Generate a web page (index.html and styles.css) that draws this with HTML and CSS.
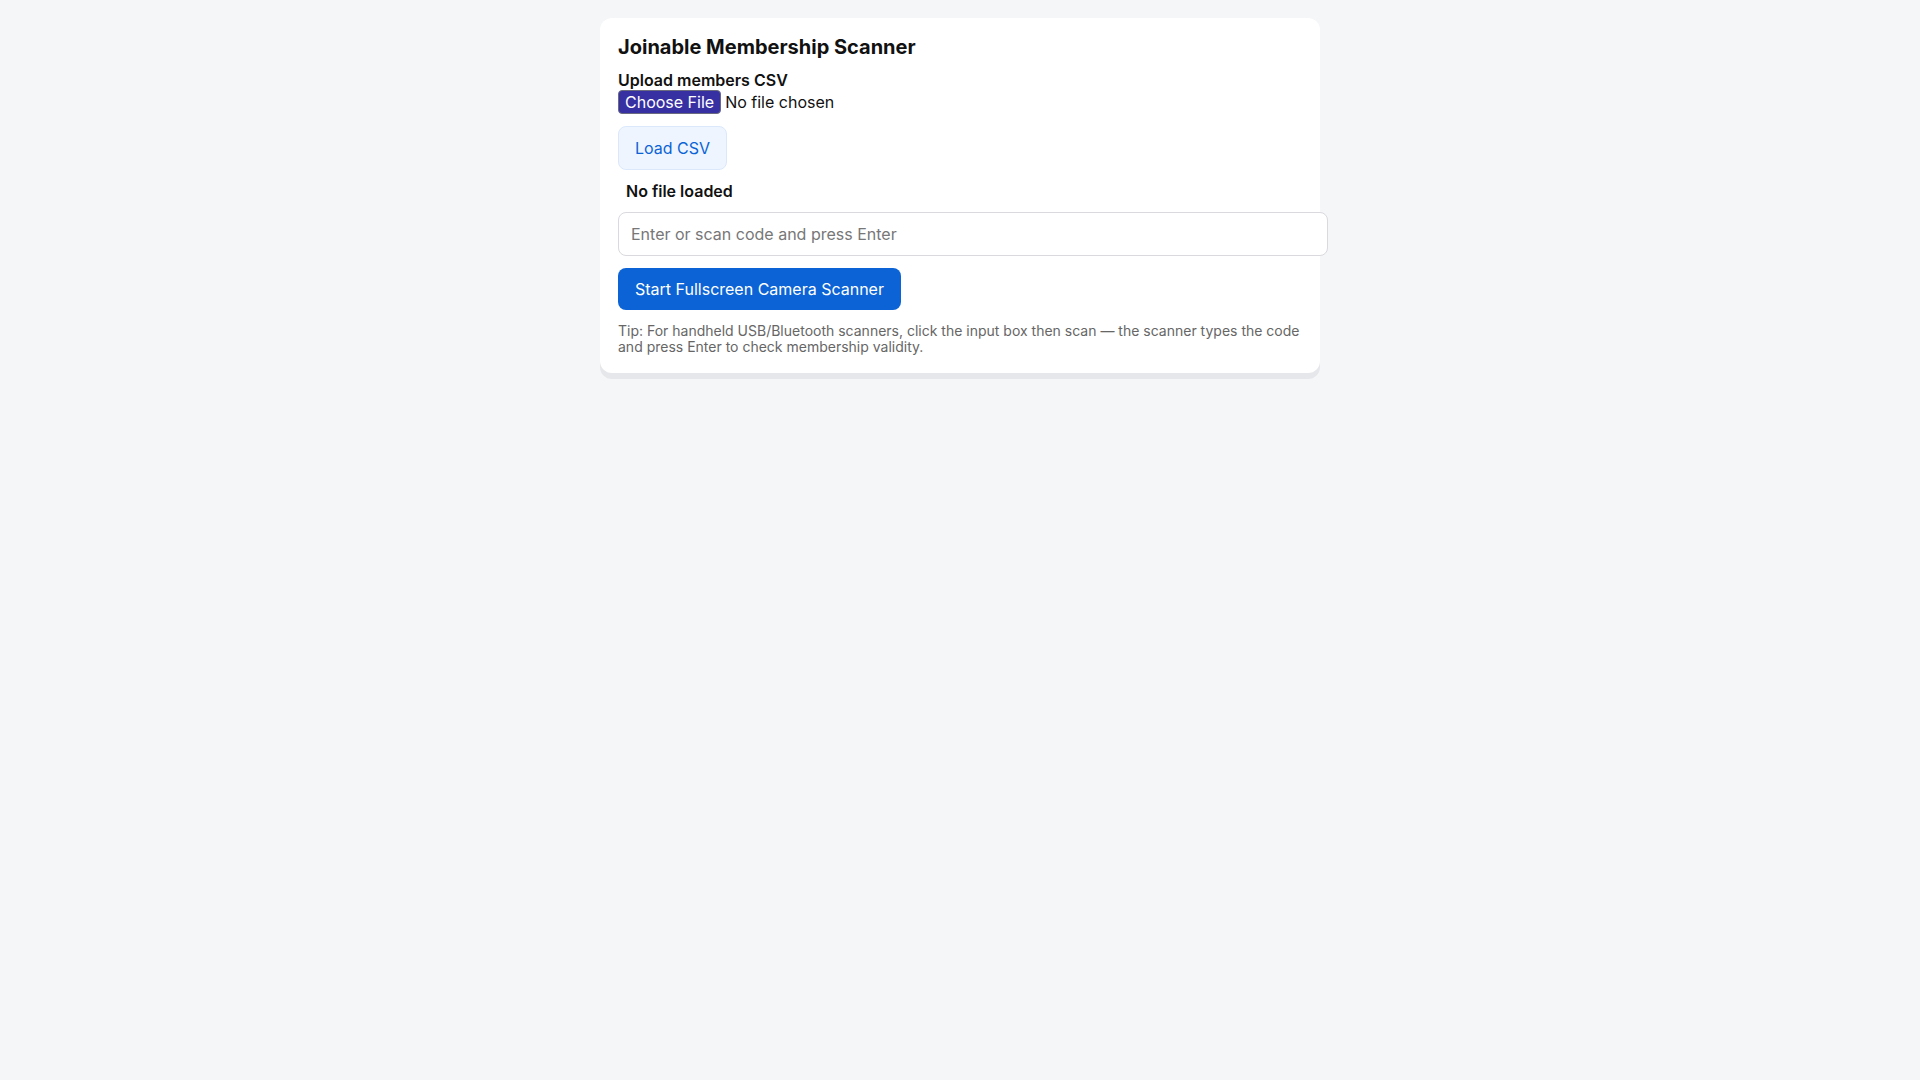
FILE: index.html
```html
<!DOCTYPE html>
<html lang="en">
<head>
<meta charset="utf-8">
<title>Joinable Membership Scanner</title>
<link rel="stylesheet" href="styles.css">
</head>
<body>
<main class="card">
  <h1 class="title">Joinable Membership Scanner</h1>
  <label class="field-label" for="csv">Upload members CSV</label>
  <input class="file-input" id="csv" type="file" accept=".csv">
  <div class="row row-load">
    <button class="btn btn-light" type="button">Load CSV</button>
  </div>
  <div class="status">No file loaded</div>
  <input class="code-input" type="text" placeholder="Enter or scan code and press Enter">
  <div class="row row-start">
    <button class="btn btn-primary" type="button">Start Fullscreen Camera Scanner</button>
  </div>
  <p class="tip">Tip: For handheld USB/Bluetooth scanners, click the input box then scan — the scanner types the code and press Enter to check membership validity.</p>
</main>
</body>
</html>
```
FILE: styles.css
```css
html, body {
  margin: 0;
  padding: 0;
}
body {
  background: #f5f6f8;
  font-family: Inter, "Noto Sans", sans-serif;
  color: #111;
  padding: 18px;
}
.card {
  max-width: 720px;
  box-sizing: border-box;
  margin: 0 auto;
  background: #fff;
  border-radius: 12px;
  padding: 17px 18px 18px;
  box-shadow: 0 6px 0 #e6e7ea;
}
.title {
  margin: 0 0 11px;
  font-size: 20px;
  font-weight: 700;
  line-height: normal;
}
.field-label {
  display: block;
  font-weight: 600;
  font-size: 16px;
}
.file-input {
  display: block;
  font-family: Inter, "Noto Sans", sans-serif;
  font-size: 16px;
  color: #111;
}
.file-input::file-selector-button {
  font: inherit;
  background: #3730a3;
  color: #fff;
  border: 1px solid #6b6b80;
  border-radius: 4px;
  padding: 1px 6px;
  margin-right: 4px;
}
.row-load {
  margin-top: 12px;
}
.row-start {
  margin-top: 12px;
}
.btn {
  display: block;
  font-family: inherit;
  font-size: 16px;
  line-height: normal;
  border-radius: 8px;
  cursor: pointer;
}
.btn-light {
  background: #eef5ff;
  color: #0b63d6;
  border: 1px solid #dbe8fb;
  padding: 11px 16px;
}
.btn-primary {
  background: #0b63d6;
  color: #fff;
  border: 0;
  padding: 11px 17px;
}
.status {
  margin: 11px 0 11px;
  padding: 0 8px;
  font-weight: 600;
  font-size: 16px;
}
.code-input {
  display: block;
  width: 100%;
  font-family: inherit;
  font-size: 16px;
  line-height: normal;
  padding: 11px 12px;
  border: 1px solid #d9d9de;
  border-radius: 8px;
  color: #111;
}
.code-input::placeholder {
  color: #777;
}
.tip {
  margin: 13px 0 0;
  font-size: 14px;
  line-height: 16px;
  color: #666;
}
```
